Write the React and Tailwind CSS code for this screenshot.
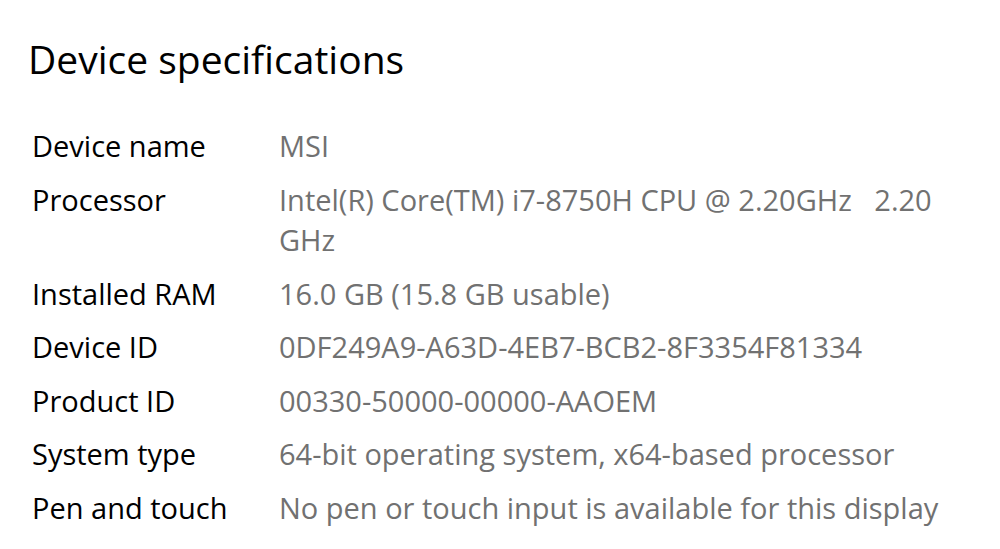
const specs = [
    { label: "Device name", value: "MSI" },
    {
        label: "Processor",
        value: (
            <>
                Intel(R) Core(TM) i7-8750H CPU @ 2.20GHz&nbsp;&nbsp;&nbsp;2.20
                <br />
                GHz
            </>
        ),
    },
    { label: "Installed RAM", value: "16.0 GB (15.8 GB usable)" },
    { label: "Device ID", value: "0DF249A9-A63D-4EB7-BCB2-8F3354F81334" },
    { label: "Product ID", value: "00330-50000-00000-AAOEM" },
    { label: "System type", value: "64-bit operating system, x64-based processor" },
    { label: "Pen and touch", value: "No pen or touch input is available for this display" },
];

export default function App() {
    return (
        <div
            className="w-[1000px] h-[549px] overflow-hidden bg-white"
            style={{ fontFamily: '"Open Sans", "Noto Sans", sans-serif' }}
        >
            <h1 className="pl-[28px] pt-[32px] text-[39px] leading-[54px] text-black font-normal">
                Device specifications
            </h1>

            <div className="mt-[40px] flex flex-col gap-[13px]">
                {specs.map((s) => (
                    <div key={s.label} className="flex text-[29px] leading-[40.5px]">
                        <div className="w-[279px] pl-[32px] shrink-0 text-black">{s.label}</div>
                        <div className="text-[#717171]">{s.value}</div>
                    </div>
                ))}
            </div>
        </div>
    );
}
